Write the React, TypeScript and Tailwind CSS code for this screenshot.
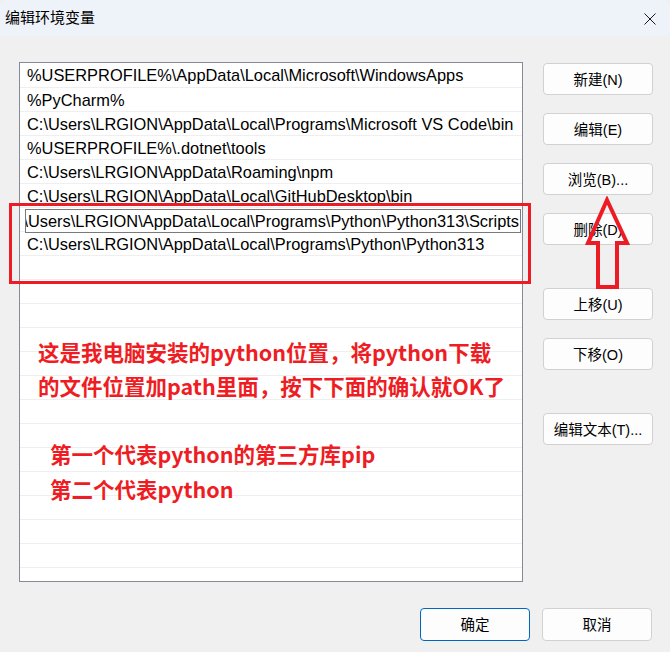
import React from "react";

// ── Data ──────────────────────────────────────────────────────────────────────

const PATHS = [
  "%USERPROFILE%\\AppData\\Local\\Microsoft\\WindowsApps",
  "%PyCharm%",
  "C:\\Users\\LRGION\\AppData\\Local\\Programs\\Microsoft VS Code\\bin",
  "%USERPROFILE%\\.dotnet\\tools",
  "C:\\Users\\LRGION\\AppData\\Roaming\\npm",
  "C:\\Users\\LRGION\\AppData\\Local\\GitHubDesktop\\bin",
  "C:\\Users\\LRGION\\AppData\\Local\\Programs\\Python\\Python313\\Scripts",
  "C:\\Users\\LRGION\\AppData\\Local\\Programs\\Python\\Python313",
];

const EDITING = 6;
const ROW_COUNT = 22;

const UI_FONT = {
  fontFamily: '"Liberation Sans", "Noto Sans CJK SC", sans-serif',
};
const NOTE_FONT = {
  fontFamily: '"Noto Sans CJK SC", "Noto Sans", sans-serif',
};

// ── Side button ───────────────────────────────────────────────────────────────

function SideButton({ label, className = "" }: { label: string; className?: string }) {
  return (
    <button
      className={`h-[32px] w-[110px] rounded-[4px] border border-[#d1d1d1] bg-[#fdfdfd] pt-[3px] text-[14.5px] text-black ${className}`}
    >
      {label}
    </button>
  );
}

// ── Main ──────────────────────────────────────────────────────────────────────

export default function App() {
  const rows = Array.from({ length: ROW_COUNT }, (_, i) => PATHS[i] ?? "");

  return (
    <div className="relative h-[652px] w-[670px] overflow-hidden bg-[#f0f0f0]" style={UI_FONT}>
      {/* Title bar */}
      <div className="flex h-[36px] items-center justify-between rounded-t-[8px] bg-[#eef3f9] pl-[5px] pr-[14px]">
        <span className="text-[15px] text-black">编辑环境变量</span>
        <svg width="12" height="12" viewBox="0 0 12 12" className="mt-[1px]">
          <path d="M0.5 0.5 L11.5 11.5 M11.5 0.5 L0.5 11.5" stroke="#1a1a1a" strokeWidth="1" />
        </svg>
      </div>

      {/* List + buttons */}
      <div className="flex pl-[19px] pt-[26px]">
        <div className="h-[520px] w-[504px] overflow-hidden border border-[#868a92] bg-white">
          {rows.map((text, i) => (
            <div
              key={i}
              className={`flex h-[24px] items-center pt-[1px] ${i > 0 ? "border-t border-[#efefef]" : ""}`}
            >
              {i === EDITING ? (
                <div className="ml-[5px] mr-[1px] mt-[2px] flex h-[24px] min-w-0 flex-1 items-center justify-end overflow-hidden border border-[#7a7a7a] bg-white pr-[1px]">
                  <span className="shrink-0 whitespace-nowrap text-[16.4px] text-black">{text}</span>
                </div>
              ) : (
                <span className="whitespace-nowrap pl-[7px] text-[16.4px] text-black">{text}</span>
              )}
            </div>
          ))}
        </div>

        <div className="ml-[20px] flex flex-col pt-[1px]">
          <SideButton label="新建(N)" />
          <SideButton label="编辑(E)" className="mt-[18px]" />
          <SideButton label="浏览(B)..." className="mt-[18px]" />
          <SideButton label="删除(D)" className="mt-[18px]" />
          <SideButton label="上移(U)" className="mt-[43px]" />
          <SideButton label="下移(O)" className="mt-[18px]" />
          <SideButton label="编辑文本(T)..." className="mt-[43px]" />
        </div>
      </div>

      {/* Bottom buttons */}
      <div className="mt-[26px] flex justify-end gap-[12px] pr-[18px]">
        <button className="h-[33px] w-[110px] rounded-[4px] border border-[#0067c0] bg-[#fdfdfd] pt-[2px] text-[14.5px] text-black">
          确定
        </button>
        <button className="h-[33px] w-[110px] rounded-[4px] border border-[#d1d1d1] bg-[#fdfdfd] pt-[2px] text-[14.5px] text-black">
          取消
        </button>
      </div>

      {/* ── Annotations (pasted over the screenshot) ─────────────────────── */}
      <div className="absolute left-[9px] top-[203px] h-[81px] w-[522px] border-[3px] border-[#ed1c24]" />

      <svg className="absolute left-[584px] top-[196px]" width="48" height="96" viewBox="0 0 48 96">
        <polygon
          points="23,4 43,47 33,47 33,91 14,91 14,47 4,47"
          fill="none"
          stroke="#ed1c24"
          strokeWidth="4"
          strokeLinejoin="miter"
        />
      </svg>

      <div
        className="absolute left-[38px] top-[335px] text-[21.5px] font-bold leading-[34px] text-[#ee1d23]"
        style={NOTE_FONT}
      >
        <p>这是我电脑安装的python位置，将python下载</p>
        <p>的文件位置加path里面，按下下面的确认就OK了</p>
      </div>

      <div
        className="absolute left-[50px] top-[436px] text-[21.5px] font-bold leading-[35px] text-[#ee1d23]"
        style={NOTE_FONT}
      >
        <p>第一个代表python的第三方库pip</p>
        <p>第二个代表python</p>
      </div>
    </div>
  );
}
